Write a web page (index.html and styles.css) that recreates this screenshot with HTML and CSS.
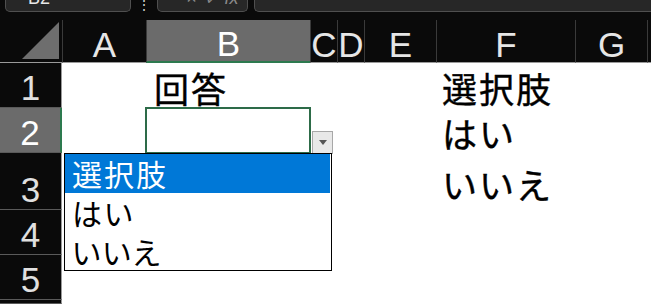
FILE: index.html
```html
<!DOCTYPE html>
<html lang="ja">
<head>
<meta charset="UTF-8">
<meta name="viewport" content="width=device-width, initial-scale=1.0">
<title>データの入力規則 - リスト</title>
<link rel="stylesheet" href="styles.css">
</head>
<body>

<div class="topbar">
    <div class="namebox"><span class="boxtext">B2</span></div>
    <div class="dots">⋮</div>
    <div class="fxbox"><span class="boxtext">× ✓ fx</span></div>
    <div class="formula"></div>
</div>

<div class="sheet">
    <div class="corner">
        <svg width="37" height="37" viewBox="0 0 37 37"><polygon points="37,0 37,37 0,37" fill="#6e6e6e"/></svg>
    </div>
    <div class="colhead">A</div>
    <div class="colhead active">B</div>
    <div class="colhead">C</div>
    <div class="colhead">D</div>
    <div class="colhead">E</div>
    <div class="colhead">F</div>
    <div class="colhead">G</div>
    <div class="colhead"></div>

    <!-- 1行目 -->
    <div class="rowhead">1</div>
    <div class="cell"></div>
    <div class="cell big answer">回答</div>
    <div class="cell"></div>
    <div class="cell"></div>
    <div class="cell"></div>
    <div class="cell big">選択肢</div>
    <div class="cell"></div>
    <div class="cell"></div>

    <!-- 2行目 -->
    <div class="rowhead active">2</div>
    <div class="cell"></div>
    <div class="cell selected">
        <div class="dropbtn"><svg width="8" height="5" viewBox="0 0 8 5"><polygon points="0,0 8,0 4,5" fill="#555"/></svg></div>
    </div>
    <div class="cell"></div>
    <div class="cell"></div>
    <div class="cell"></div>
    <div class="cell big kana">はい</div>
    <div class="cell"></div>
    <div class="cell"></div>

    <!-- 3行目 -->
    <div class="rowhead">3</div>
    <div class="cell"></div>
    <div class="cell"></div>
    <div class="cell"></div>
    <div class="cell"></div>
    <div class="cell"></div>
    <div class="cell big kana tall">いいえ</div>
    <div class="cell"></div>
    <div class="cell"></div>

    <div class="rowhead">4</div>
    <div class="cell"></div>
    <div class="cell"></div>
    <div class="cell"></div>
    <div class="cell"></div>
    <div class="cell"></div>
    <div class="cell"></div>
    <div class="cell"></div>
    <div class="cell"></div>

    <div class="rowhead">5</div>
    <div class="cell"></div>
    <div class="cell"></div>
    <div class="cell"></div>
    <div class="cell"></div>
    <div class="cell"></div>
    <div class="cell"></div>
    <div class="cell"></div>
    <div class="cell"></div>

    <div class="rowhead"></div>
    <div class="cell"></div>
    <div class="cell"></div>
    <div class="cell"></div>
    <div class="cell"></div>
    <div class="cell"></div>
    <div class="cell"></div>
    <div class="cell"></div>
    <div class="cell"></div>

    <!-- 入力規則のリスト -->
    <ul class="droplist">
        <li class="current">選択肢</li>
        <li>はい</li>
        <li>いいえ</li>
    </ul>
</div>

</body>
</html>
```

FILE: styles.css
```css
html, body {
    margin: 0;
    padding: 0;
}

body {
    background-color: #0a0a0a;
    width: 651px;
    height: 304px;
    overflow: hidden;
    font-family: "Liberation Sans", Arial, sans-serif;
}

/* 数式バー */
.topbar {
    display: flex;
    height: 12px;
    align-items: flex-end;
    overflow: hidden;
}

.namebox,
.fxbox,
.formula {
    height: 16px;
    background-color: #272727;
    border: 1px solid #4f4f4f;
    border-top: none;
    border-radius: 0 0 5px 5px;
    box-sizing: border-box;
    overflow: hidden;
}

.namebox {
    width: 126px;
    margin-left: 5px;
}

.dots {
    width: 26px;
    color: #d0d0d0;
    font-size: 14px;
    line-height: 10px;
    text-align: center;
    height: 12px;
    overflow: hidden;
}

.fxbox {
    width: 91px;
}

.formula {
    flex-grow: 1;
    margin-left: 6px;
    border-radius: 0 0 0 5px;
    border-right: none;
}

.boxtext {
    display: block;
    color: #e8e8e8;
    font-size: 18px;
    line-height: 18px;
    margin-top: -7px;
    padding-left: 22px;
}

.fxbox .boxtext {
    color: #8a8a8a;
    font-style: italic;
    padding-left: 28px;
}

/* シート */
.sheet {
    position: relative;
    margin-top: 8px;
    display: grid;
    grid-template-columns: 62px 84px 164px 27px 27px 72px 139px 72px 4px;
    grid-template-rows: 43px 45px 45px 57px 45px 45px 4px;
}

.corner {
    display: flex;
    align-items: flex-end;
    justify-content: flex-end;
    padding: 0 3px 3px 0;
    border-bottom: 1px solid #9a9a9a;
}

.colhead {
    display: flex;
    align-items: flex-end;
    justify-content: center;
    color: #e6e6e6;
    font-size: 35px;
    line-height: 35px;
    border-left: 1px solid #3a3a3a;
    border-bottom: 1px solid #9a9a9a;
}

.colhead.active {
    background-color: #6b6b6b;
    color: #ffffff;
    border-bottom: 2px solid #2d7a4f;
}

.rowhead {
    display: flex;
    align-items: flex-end;
    justify-content: center;
    padding-bottom: 2px;
    color: #e0e0e0;
    font-size: 35px;
    line-height: 35px;
    border-bottom: 1px solid #5a5a5a;
    border-right: 1px solid #9a9a9a;
}

.rowhead.active {
    background-color: #6b6b6b;
    color: #ffffff;
    border-right: 2px solid #2d7a4f;
}

.cell {
    position: relative;
    background-color: #ffffff;
    display: flex;
    align-items: flex-end;
    color: #000000;
}

.big {
    font-family: "Noto Sans CJK JP", sans-serif;
    font-size: 35px;
    line-height: 35px;
    letter-spacing: 2px;
    padding: 0 0 3px 6px;
    white-space: nowrap;
    -webkit-text-stroke: 0.4px #000000;
}

.answer {
    padding-left: 8px;
}

.kana {
    padding-bottom: 3px;
}

.tall {
    padding-bottom: 9px;
}

.selected {
    outline: 2px solid #2d6b48;
    outline-offset: -1px;
    z-index: 2;
}

.dropbtn {
    position: absolute;
    left: 166px;
    top: 23px;
    width: 19px;
    height: 21px;
    background-color: #e8e8e8;
    border: 1px solid #a8a8a8;
    display: flex;
    align-items: center;
    justify-content: center;
}

.droplist {
    position: absolute;
    left: 64px;
    top: 133px;
    width: 268px;
    height: 118px;
    margin: 0;
    padding: 0;
    list-style: none;
    background-color: #ffffff;
    border: 1px solid #000000;
    box-sizing: border-box;
    z-index: 3;
    font-family: "Noto Sans CJK JP", sans-serif;
    font-size: 30px;
}

.droplist li {
    height: 39px;
    line-height: 32px;
    padding: 3px 0 0 7px;
    box-sizing: border-box;
    letter-spacing: 2px;
    font-feature-settings: "palt";
    color: #000000;
}

.droplist li.current {
    background-color: #0078d7;
    color: #ffffff;
    margin-right: 1px;
}
```
